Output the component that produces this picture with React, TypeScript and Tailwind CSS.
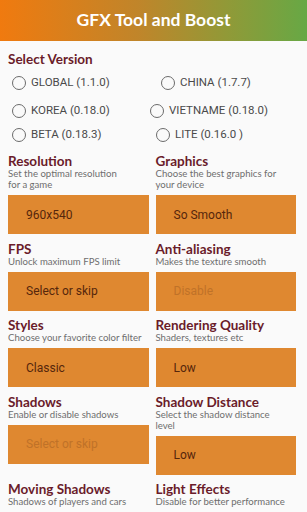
import React from 'react';

const rows: [string, string, string][] = [
  ['GLOBAL (1.1.0)', 'CHINA (1.7.7)', 'pl-[13px]'],
  ['KOREA (0.18.0)', 'VIETNAME (0.18.0)', 'pl-[2px]'],
  ['BETA (0.18.3)', 'LITE (0.16.0 )', 'pl-[8px]'],
];

const Radio: React.FC<{ label: string }> = ({ label }) => (
  <div className="flex items-center gap-[5px]">
    <span className="w-[14px] h-[14px] rounded-full border-[1.6px] border-[#6b6b6b] shrink-0" />
    <span className="text-[11.5px] text-[#4a4a4a] whitespace-nowrap" style={{ fontFamily: 'Roboto, sans-serif' }}>
      {label}
    </span>
  </div>
);

type Item = { title: string; desc: React.ReactNode; value: string; faded?: boolean };

const items: Item[] = [
  { title: 'Resolution', desc: <>Set the optimal resolution<br />for a game</>, value: '960x540' },
  { title: 'Graphics', desc: <>Choose the best graphics for<br />your device</>, value: 'So Smooth' },
  { title: 'FPS', desc: 'Unlock maximum FPS limit', value: 'Select or skip' },
  { title: 'Anti-aliasing', desc: 'Makes the texture smooth', value: 'Disable', faded: true },
  { title: 'Styles', desc: 'Choose your favorite color filter', value: 'Classic' },
  { title: 'Rendering Quality', desc: 'Shaders, textures etc', value: 'Low' },
  { title: 'Shadows', desc: 'Enable or disable shadows', value: 'Select or skip', faded: true },
  { title: 'Shadow Distance', desc: <>Select the shadow distance<br />level</>, value: 'Low' },
  { title: 'Moving Shadows', desc: 'Shadows of players and cars', value: '' },
  { title: 'Light Effects', desc: 'Disable for better performance', value: '' },
];

const Setting: React.FC<{ item: Item }> = ({ item }) => (
  <div className="flex flex-col min-w-0">
    <div className="text-[13.5px] leading-[14px] font-bold text-[#6a1c2a]" style={{ fontFamily: 'Lato, sans-serif' }}>
      {item.title}
    </div>
    <div className="text-[9.6px] leading-[11px] text-[#6e6e6e] whitespace-nowrap" style={{ fontFamily: 'Lato, sans-serif' }}>
      {item.desc}
    </div>
    {item.value && (
      <div className="mt-[5px] h-[39px] bg-[#df8830] flex items-center pl-[18px]">
        <span
          className={`text-[12px] ${item.faded ? 'text-[#bf7228]' : 'text-[#55260c]'}`}
          style={{ fontFamily: 'Roboto, sans-serif' }}
        >
          {item.value}
        </span>
      </div>
    )}
  </div>
);

const App: React.FC = () => {
  return (
    <div className="w-[307px] h-[512px] overflow-hidden bg-[#fafafa]">
      <div className="h-[41px] flex items-center justify-center bg-[linear-gradient(90deg,#f07a0f_0%,#c0852a_45%,#8f9a38_75%,#67a845_100%)]">
        <span className="text-white font-bold text-[17.5px]" style={{ fontFamily: 'Lato, sans-serif' }}>
          GFX Tool and Boost
        </span>
      </div>

      <div className="pl-[8px] pt-[11px]">
        <div className="text-[13.5px] leading-[14px] font-bold text-[#6a1c2a]" style={{ fontFamily: 'Lato, sans-serif' }}>
          Select Version
        </div>
      </div>

      <div className="flex flex-col mt-[5px]">
        {rows.map(([l, r, cls], i) => (
          <div key={i} className={`flex items-center h-[24px] ${i === 1 ? 'mt-[4px]' : ''}`}>
            <div className="w-[148px] pl-[12px]">
              <Radio label={l} />
            </div>
            <div className={cls}>
              <Radio label={r} />
            </div>
          </div>
        ))}
      </div>

      <div className="grid grid-cols-2 gap-x-[7px] gap-y-[7.5px] pl-[8px] pr-[11px] mt-[7px]">
        {items.map((it) => (
          <Setting key={it.title} item={it} />
        ))}
      </div>
    </div>
  );
};

export default App;
